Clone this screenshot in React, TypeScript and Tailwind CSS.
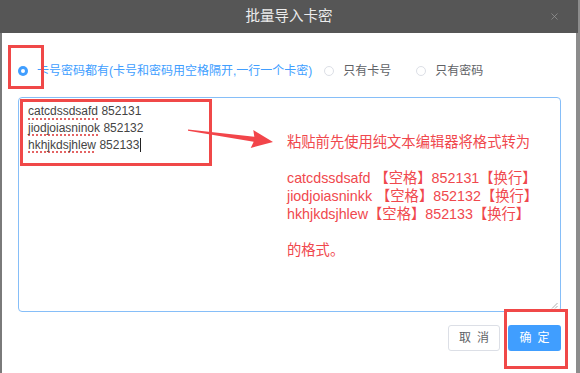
import { X } from 'lucide-react';

const RED = '#f04848';

const Radio = ({ checked, label }: { checked?: boolean; label: string }) => (
  <label className="flex items-center gap-[9px]">
    {checked ? (
      <span className="flex h-[10px] w-[10px] items-center justify-center rounded-full bg-[#409eff]">
        <span className="h-[4px] w-[4px] rounded-full bg-white" />
      </span>
    ) : (
      <span className="h-[10px] w-[10px] rounded-full border border-[#dcdfe6] bg-white" />
    )}
    <span className={checked ? 'text-[#409eff]' : 'text-[#606266]'}>{label}</span>
  </label>
);

const Misspelled = ({ children }: { children: string }) => (
  <span className="underline decoration-dotted decoration-[#e46464] decoration-[1.5px] underline-offset-[3px]">
    {children}
  </span>
);

export default function App() {
  return (
    <div className="relative flex h-[373px] w-[580px] flex-col overflow-hidden bg-[#8c8c8c] font-['Liberation_Sans','Noto_Sans_CJK_SC',sans-serif]">
      {/* header */}
      <div className="grid h-[33px] w-[578px] shrink-0 grid-cols-[1fr_auto_1fr] items-center bg-[#565656]">
        <span />
        <span className="text-[14.5px] text-[#ececec]">批量导入卡密</span>
        <span className="mr-[18px] justify-self-end text-[#9a9a9a]">
          <X size={11} strokeWidth={1.5} />
        </span>
      </div>

      <div className="flex flex-1">
        <div className="w-[2px] bg-[#7a7a7a]" />
        <div className="flex w-[574px] flex-col bg-white">
          {/* radio row */}
          <div className="mt-[28px] flex h-[20px] items-center pl-[16px] text-[12px]">
            <Radio checked label="卡号密码都有(卡号和密码用空格隔开,一行一个卡密)" />
            <div className="ml-[12px]">
              <Radio label="只有卡号" />
            </div>
            <div className="ml-[25px]">
              <Radio label="只有密码" />
            </div>
          </div>

          {/* textarea */}
          <div className="relative ml-[16px] mt-[16px] h-[215px] w-[543px] rounded-[4px] border border-[#86bef8] pl-[9px] pt-[5px] text-[12px] leading-[16.8px] text-[#444]">
            <div>
              <Misspelled>catcdssdsafd</Misspelled> 852131
            </div>
            <div>
              <Misspelled>jiodjoiasninok</Misspelled> 852132
            </div>
            <div className="flex items-center">
              <span>
                <Misspelled>hkhjkdsjhlew</Misspelled> 852133
              </span>
              <span className="ml-px h-[14px] w-px bg-[#222]" />
            </div>
            <svg className="absolute bottom-[2px] right-[2px]" width="7" height="7" viewBox="0 0 7 7">
              <path d="M1 6.5L6.5 1M4 6.5L6.5 4" stroke="#9a9a9a" strokeWidth="0.8" />
            </svg>
          </div>

          {/* footer */}
          <div className="mt-[13px] flex justify-end gap-[8px] pr-[15px] text-[12px]">
            <button className="flex h-[26px] w-[52px] items-center justify-center rounded-[3px] border border-[#dcdfe6] bg-white tracking-[6px] text-[#606266]">
              <span className="-mr-[6px]">取消</span>
            </button>
            <button className="flex h-[26px] w-[53px] items-center justify-center rounded-[3px] bg-[#409eff] tracking-[6px] text-white">
              <span className="-mr-[6px]">确定</span>
            </button>
          </div>
        </div>
      </div>

      {/* annotations */}
      <div className="pointer-events-none absolute left-[8px] top-[45px] h-[44px] w-[36px] border-[3px]" style={{ borderColor: RED }} />
      <div className="pointer-events-none absolute left-[20px] top-[99px] h-[67px] w-[192px] border-[3px]" style={{ borderColor: RED }} />
      <div className="pointer-events-none absolute left-[504px] top-[309px] h-[60px] w-[64px] border-[3px]" style={{ borderColor: RED }} />
      <svg className="pointer-events-none absolute left-0 top-0" width="580" height="373">
        <polygon
          points="188,129.4 254.3,136.7 253.3,130.1 273,142 250.7,147.9 253.7,141.7 188,130.8"
          fill="#f2454a"
        />
      </svg>
      <div className="pointer-events-none absolute left-[287px] top-[133px] whitespace-pre text-[14.3px] leading-[18px] text-[#f0484d]">
        {'粘贴前先使用纯文本编辑器将格式转为\n\ncatcdssdsafd 【空格】852131【换行】\njiodjoiasninkk 【空格】852132【换行】\nhkhjkdsjhlew【空格】852133【换行】\n\n的格式。'}
      </div>
    </div>
  );
}
